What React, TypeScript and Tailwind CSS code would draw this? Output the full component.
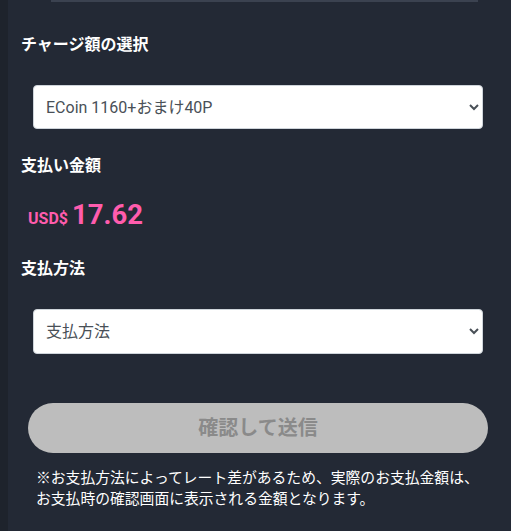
export default function App() {
  const jp = "font-['Roboto','Noto_Sans_CJK_JP',sans-serif]";

  return (
    <div className={`flex h-[531px] w-full overflow-hidden bg-[#232935] ${jp}`}>
      {/* left edge strip */}
      <div className="w-[8px] shrink-0 bg-[#1e232c]" />

      <div className="flex flex-1 flex-col pl-[13px] pr-[18px]">
        {/* bottom border of the field above */}
        <div className="ml-[30px] mr-[15px] h-[2px] bg-[#3b4250]" />

        <h2 className="mt-[31px] text-[16px] font-bold leading-[24px] text-white">チャージ額の選択</h2>

        <div className="ml-[12px] mt-[28px]">
          <select
            defaultValue="1160"
            className="h-[44px] w-[450px] rounded-[4px] border border-[#ced4da] bg-white pl-[8px] text-[16px] text-[#495057]"
          >
            <option value="1160">ECoin 1160+おまけ40P</option>
            <option value="2300">ECoin 2300+おまけ100P</option>
          </select>
        </div>

        <h2 className="mt-[25px] text-[16px] font-bold leading-[24px] text-white">支払い金額</h2>

        <div className="ml-[7px] mt-[21px] flex items-baseline gap-[4px] font-bold leading-[32px] text-[#ff5cad]">
          <span className="text-[16px]">USD$</span>
          <span className="text-[27.5px]">17.62</span>
        </div>

        <h2 className="mt-[22px] text-[16px] font-bold leading-[24px] text-white">支払方法</h2>

        <div className="ml-[12px] mt-[28px]">
          <select
            defaultValue=""
            className="h-[45px] w-[450px] rounded-[4px] border border-[#ced4da] bg-white pl-[8px] text-[16px] text-[#495057]"
          >
            <option value="">支払方法</option>
            <option value="card">クレジットカード</option>
          </select>
        </div>

        <button
          disabled
          className="ml-[7px] mt-[49px] h-[50px] w-[460px] shrink-0 rounded-full bg-[#bdbdbd] text-[20px] font-bold text-[#8a8a8a]"
        >
          確認して送信
        </button>

        <p className="ml-[15px] mt-[15px] text-[14.8px] leading-[21px] text-white">
          ※お支払方法によってレート差があるため、実際のお支払金額は、
          <br />
          お支払時の確認画面に表示される金額となります。
        </p>
      </div>
    </div>
  );
}
